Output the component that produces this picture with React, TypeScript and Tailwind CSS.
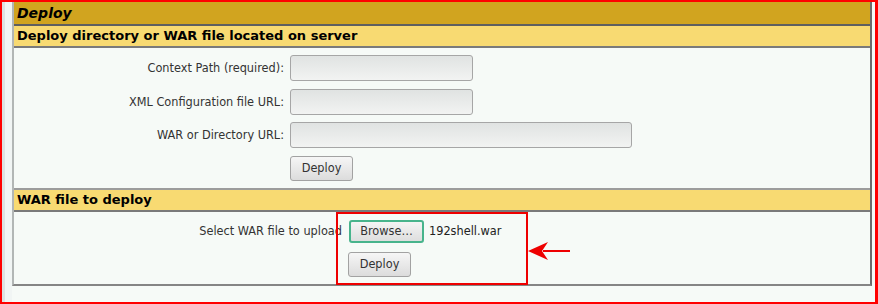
import React from "react";

const label = "text-right text-[12.6px] text-[#333] font-['DejaVu_Sans_Condensed',sans-serif]";
const btn =
  "h-[25px] rounded-[3px] border border-[#a2a2a2] bg-linear-to-b from-[#f6f6f6] to-[#dcdcdc] text-[12.6px] text-[#333] leading-none font-['DejaVu_Sans_Condensed',sans-serif]";
const field =
  "h-[26px] rounded-[3px] border border-[#a6a6a6] bg-linear-to-b from-[#e0e3e2] to-[#f2f3f2] outline-none";

export default function App() {
  return (
    <div className="relative w-[878px] h-[304px] overflow-hidden bg-[#f6faf7] border-solid border-[#ff0000] border-t-2 border-l-2 border-b-2 border-r-[3px] font-['DejaVu_Sans',Verdana,sans-serif]">
      <div className="flex h-full">
        <div className="w-[3px] bg-[#dde3e2]" />
        <div className="w-[7px] bg-[#f1f5f4]" />
        <div className="flex flex-col w-[860px] h-[284px] border-l-2 border-r-2 border-b-2 border-l-[#b2b6b5] border-r-[#6c6c6c] border-b-[#858585]">
          {/* title */}
          <div className="h-[22px] bg-[#d1a41f] pl-[3px] text-[14px] leading-[22px] font-bold italic text-black">
            Deploy
          </div>
          <div className="h-[2px] bg-[#5f5f5f]" />
          <div className="h-[20px] bg-[#f8da72] pl-[3px] text-[13px] leading-[20px] font-bold text-black">
            Deploy directory or WAR file located on server
          </div>
          <div className="h-[2px] bg-[#7a7a7a]" />

          {/* server deploy form */}
          <div className="h-[140px] pt-[7px] flex flex-col">
            <div className="flex items-center h-[26px] gap-[6px]">
              <span className={`w-[270px] ${label}`}>Context Path (required):</span>
              <input className={`w-[183px] ${field}`} />
            </div>
            <div className="flex items-center h-[26px] gap-[6px] mt-[8px]">
              <span className={`w-[270px] ${label}`}>XML Configuration file URL:</span>
              <input className={`w-[183px] ${field}`} />
            </div>
            <div className="flex items-center h-[26px] gap-[6px] mt-[7px]">
              <span className={`w-[270px] ${label}`}>WAR or Directory URL:</span>
              <input className={`w-[342px] ${field}`} />
            </div>
            <div className="flex items-center gap-[6px] mt-[8px]">
              <span className="w-[270px]" />
              <button className={`w-[63px] ${btn}`}>Deploy</button>
            </div>
          </div>

          <div className="h-[2px] bg-[#9c9c9c]" />
          <div className="h-[20px] bg-[#f8da72] pl-[3px] text-[13px] leading-[20px] font-bold text-black">
            WAR file to deploy
          </div>
          <div className="h-[2px] bg-[#7a7a7a]" />

          {/* upload form */}
          <div className="h-[72px] pt-[8px] flex flex-col">
            <div className="flex items-center h-[23px]">
              <span className={`w-[328px] ${label}`}>Select WAR file to upload</span>
              <button className="ml-[7px] w-[75px] h-[23px] rounded-[3px] border-2 border-[#48b48c] bg-linear-to-b from-[#f4f4f4] to-[#dedede] text-[12.6px] text-[#333] leading-none font-['DejaVu_Sans_Condensed',sans-serif]">
                Browse…
              </button>
              <span className="ml-[5px] text-[12.6px] text-[#222] font-['DejaVu_Sans_Condensed',sans-serif]">192shell.war</span>
            </div>
            <div className="flex mt-[9px]">
              <span className="w-[334px]" />
              <button className={`w-[63px] ${btn}`}>Deploy</button>
            </div>
          </div>
        </div>
      </div>

      {/* annotation */}
      <div className="absolute left-[334px] top-[210px] w-[192px] h-[73px] border-2 border-[#ee0000]" />
      <svg
        className="absolute left-[525px] top-[238px]"
        width="44"
        height="22"
        viewBox="0 0 44 22"
      >
        <line x1="16" y1="11" x2="43" y2="11" stroke="#ee0000" strokeWidth="2" />
        <path d="M1 11 L21 2 L15 11 L21 20 Z" fill="#ee0000" />
      </svg>
    </div>
  );
}
